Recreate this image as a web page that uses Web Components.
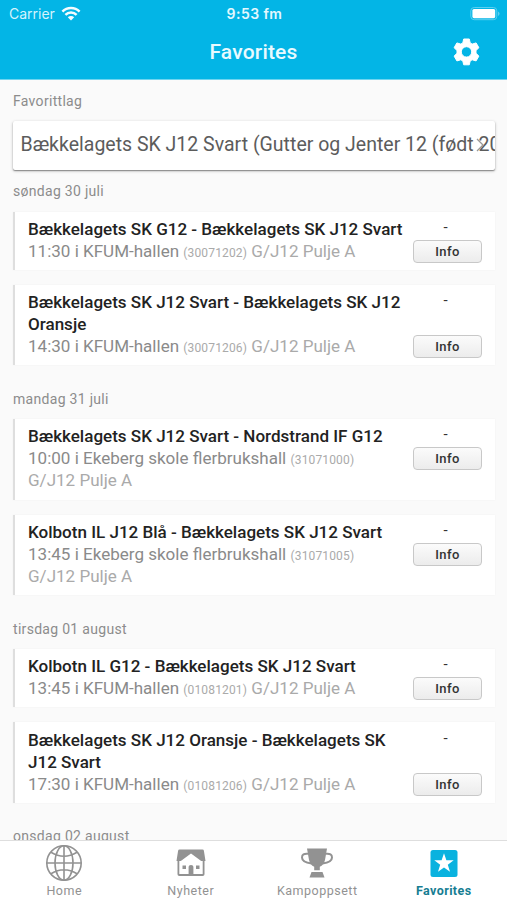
<!DOCTYPE html>
<html lang="no">
<head>
<meta charset="utf-8">
<meta name="viewport" content="width=device-width, initial-scale=1">
<title>Favorites</title>
<style>
body {
    background: #fafafa;
    font-family: Roboto, "Liberation Sans", sans-serif;
    margin: 0;
    overflow: hidden;
}
</style>
</head>
<body>
<favorites-app>
    <status-bar slot="header"></status-bar>
    <title-bar slot="header">Favorites</title-bar>

    <section-label>Favorittlag</section-label>
    <team-select>Bækkelagets SK J12 Svart (Gutter og Jenter 12 (født 2011))</team-select>

    <match-day>
        <span slot="date">søndag 30 juli</span>
        <match-card time="11:30" venue="KFUM-hallen" number="30071202">Bækkelagets SK G12 - Bækkelagets SK J12 Svart</match-card>
        <match-card time="14:30" venue="KFUM-hallen" number="30071206">Bækkelagets SK J12 Svart - Bækkelagets SK J12 Oransje</match-card>
    </match-day>
    <match-day>
        <span slot="date">mandag 31 juli</span>
        <match-card time="10:00" venue="Ekeberg skole flerbrukshall" number="31071000">Bækkelagets SK J12 Svart - Nordstrand IF G12</match-card>
        <match-card time="13:45" venue="Ekeberg skole flerbrukshall" number="31071005">Kolbotn IL J12 Blå - Bækkelagets SK J12 Svart</match-card>
    </match-day>
    <match-day>
        <span slot="date">tirsdag 01 august</span>
        <match-card time="13:45" venue="KFUM-hallen" number="01081201">Kolbotn IL G12 - Bækkelagets SK J12 Svart</match-card>
        <match-card time="17:30" venue="KFUM-hallen" number="01081206">Bækkelagets SK J12 Oransje - Bækkelagets SK J12 Svart</match-card>
    </match-day>
    <match-day>
        <span slot="date">onsdag 02 august</span>
    </match-day>

    <tab-bar slot="footer">
        <tab-item icon="globe">Home</tab-item>
        <tab-item icon="house">Nyheter</tab-item>
        <tab-item icon="trophy">Kampoppsett</tab-item>
        <tab-item icon="star" active>Favorites</tab-item>
    </tab-bar>
</favorites-app>

<script>
(function (){
    function define(name, html) {
        const template = document.createElement("template");
        template.innerHTML = html;

        customElements.define(name, class extends HTMLElement {
            constructor() {
                super();

                this.attachShadow({ mode: "open" });
                this.shadowRoot.appendChild(template.content.cloneNode(true));
            }
        });
    }

    define("favorites-app", `
    <style>
    :host {
        display: flex;
        flex-direction: column;
        height: 900px;
        width: 507px;
    }

    header {
        background: #03b5e6;
        box-sizing: border-box;
        border-bottom: 1px solid #6fd5f0;
        color: #fff;
        flex: none;
        height: 80px;
    }

    main {
        box-sizing: border-box;
        flex: 1;
        min-height: 0;
        overflow: hidden;
        padding: 12px 12.5px 0 13px;
    }
    </style>

    <header><slot name="header"></slot></header>
    <main><slot></slot></main>
    <slot name="footer"></slot>
    `);

    define("status-bar", `
    <style>
    :host {
        align-items: center;
        box-sizing: border-box;
        display: grid;
        font: 14px Inter, sans-serif;
        grid-template-columns: 1fr auto 1fr;
        height: 27px;
        padding: 0 7px 0 9px;
    }

    .carrier {
        align-items: center;
        color: #d5f3fc;
        display: flex;
        gap: 6px;
    }

    .time {
        color: #e4f8fe;
        font-size: 14px;
        font-weight: 600;
        letter-spacing: 0.45px;
    }

    .battery {
        justify-self: end;
    }

    svg {
        display: block;
    }
    </style>

    <div class="carrier">
        <span>Carrier</span>
        <svg width="20" height="16" viewBox="0 0 20 16" fill="none" stroke="#f4fcff" stroke-width="2.5">
            <path d="M1.4 5.6a12.2 12.2 0 0 1 17.2 0M4.4 8.900a8 8 0 0 1 11.2 0"/>
            <path d="M6.8 11.2a4.6 4.6 0 0 1 6.4 0L10 14.5z" fill="#f4fcff" stroke="none"/>
        </svg>
    </div>
    <span class="time">9:53 fm</span>
    <svg class="battery" width="30" height="14" viewBox="0 0 30 14">
        <rect x=".8" y=".5" width="26" height="12.2" rx="3.4" fill="none" stroke="#5ccfef"/>
        <rect x="2.4" y="2" width="22.8" height="9.2" rx="1.6" fill="#fff"/>
        <path d="M28 4.500q1.600.7 1.600 2.200T28 8.900z" fill="#5ccfef"/>
    </svg>
    `);

    define("title-bar", `
    <style>
    :host {
        align-items: center;
        box-sizing: border-box;
        display: grid;
        grid-template-columns: 1fr auto 1fr;
        height: 50px;
        padding: 0 27px;
    }

    h1 {
        color: #e9faff;
        font-size: 21px;
        font-weight: 500;
        grid-column: 2;
        letter-spacing: 0.2px;
        margin: 0;
    }

    svg {
        display: block;
        justify-self: end;
    }
    </style>

    <h1><slot></slot></h1>
    <svg width="27" height="28" viewBox="0 0 27 28" aria-label="Settings">
        <path d="M10.7 1h5.6l.9 3.9 2 1.2 3.9-1.2 2.8 4.8-2.9 2.8v2.8l2.9 2.8-2.8 4.8-3.9-1.1-2 1.1-.9 3.9h-5.6l-.9-3.9-2-1.1-3.9 1.1-2.8-4.8L4 15.3v-2.8L1.100 9.700l2.800-4.800 3.900 1.200 2-1.200zM13.500 8.700a5.200 5.200 0 1 0 0 10.400 5.200 5.200 0 1 0 0-10.400z" fill="#fff" fill-rule="evenodd" stroke="#fff" stroke-width="1" stroke-linejoin="round"/>
    </svg>
    `);

    define("section-label", `
    <style>
    :host {
        color: #8c8c8c;
        display: block;
        font-size: 14px;
        letter-spacing: 0.3px;
        line-height: 18px;
    }
    </style>

    <slot></slot>
    `);

    define("team-select", `
    <style>
    :host {
        background: #fff;
        border-radius: 2px;
        box-shadow: 0 1px 3px rgba(0, 0, 0, 0.3), 0 1px 1px rgba(0, 0, 0, 0.3);
        box-sizing: border-box;
        color: #5c5c5c;
        display: block;
        font-size: 19.5px;
        height: 49px;
        line-height: 48px;
        margin: 11px 0 12px;
        overflow: hidden;
        padding-left: 7.5px;
        position: relative;
        white-space: nowrap;
    }

    svg {
        position: absolute;
        right: 11px;
        top: 17px;
    }
    </style>

    <slot></slot>
    <svg width="8" height="14" viewBox="0 0 8 14" fill="none" stroke="#999" stroke-width="1.3"><path d="M1 1l6 6-6 6"/></svg>
    `);

    define("match-day", `
    <style>
    :host {
        display: block;
    }

    .matches {
        display: flex;
        flex-direction: column;
        gap: 15px;
        padding: 11.5px 0 24.5px;
    }
    </style>

    <section-label><slot name="date"></slot></section-label>
    <div class="matches"><slot></slot></div>
    `);

    define("info-button", `
    <style>
    :host {
        display: block;
    }

    button {
        background: linear-gradient(#fbfbfb, #ececec);
        border: 1px solid #c8c8c8;
        border-radius: 4px;
        box-sizing: border-box;
        color: #333;
        display: block;
        font: 500 13px/20px Roboto, sans-serif;
        height: 23px;
        letter-spacing: 0.4px;
        margin: 0 0 -1px;
        padding: 1px 0 0;
        width: 69px;
    }
    </style>

    <button><slot></slot></button>
    `);

    const matchTemplate = document.createElement("template");
    matchTemplate.innerHTML = `
    <style>
    :host {
        background: #fff;
        border-left: 2px solid #dedede;
        box-shadow: 0 0 2px rgba(0, 0, 0, 0.04);
        box-sizing: border-box;
        column-gap: 5px;
        display: grid;
        font-size: 17.05px;
        grid-template-columns: 380px 69px;
        line-height: 22px;
        padding: 6.2px 13px 8.2px;
    }

    .teams {
        color: #222;
        font-weight: 500;
    }

    .score {
        color: #333;
        font-size: 15px;
        line-height: 18px;
        padding-right: 4px;
        text-align: center;
    }

    .details {
        color: #8a8a8a;
    }

    small {
        color: #aaa;
        font-size: 12px;
        letter-spacing: 0.15px;
        line-height: 1;
    }

    .pool {
        color: #aaa;
        display: inline-block;
    }
    </style>

    <div class="teams"><slot></slot></div>
    <div class="score">-</div>
    <div class="details"><span class="place"></span> <small></small> <span class="pool">G/J12 Pulje A</span></div>
    <info-button>Info</info-button>
    `;

    class MatchCard extends HTMLElement {
        constructor() {
            super();

            this.attachShadow({ mode: "open" });
            this.shadowRoot.appendChild(matchTemplate.content.cloneNode(true));
        }

        connectedCallback() {
            this.shadowRoot.querySelector(".place").textContent =
                `${this.getAttribute("time")} i ${this.getAttribute("venue")}`;
            this.shadowRoot.querySelector("small").textContent = `(${this.getAttribute("number")})`;
        }
    }

    customElements.define("match-card", MatchCard);

    define("tab-bar", `
    <style>
    :host {
        background: #fff;
        border-top: 1px solid #dedede;
        box-sizing: border-box;
        display: grid;
        flex: none;
        grid-template-columns: repeat(4, 1fr);
        height: 60px;
        padding-left: 1px;
        position: relative;
    }
    </style>

    <slot></slot>
    `);

    const icons = {
        globe: `
        <g fill="none" stroke="currentColor" stroke-width="1.6">
            <circle cx="19" cy="19" r="17.2"/>
            <ellipse cx="19" cy="19" rx="9" ry="17.2"/>
            <path d="M19 1.8v34.4M1.8 19h34.4M6 8.2q13 8 26 0M6 29.8q13-8 26 0"/>
        </g>`,
        house: `
        <g fill="currentColor">
            <path d="M7.5 5.5h23q1.200 0 1.400 1.200L33.500 17h-4.300L19 9.500 8.800 17H4.500l1.600-10.300Q6.300 5.500 7.500 5.500z"/>
            <path d="M5.500 16h1.800v14h23.400V16h1.800v14.200q0 1.800-1.800 1.800H7.300q-1.800 0-1.800-1.800z"/>
            <path d="M16.600 31v-8.200q0-1.800 2.400-1.800t2.400 1.800V31zM10.500 21.500h3.500V25h-3.500zM24 21.500h3.500V25H24z"/>
        </g>`,
        trophy: `
        <path d="M9 4.500h20l-2 11.500q-1.200 5.200-5.200 6.800v3.500h-5.600v-3.500q-4-1.600-5.200-6.800zM13.500 28h11l2 5.500h-15z" fill="currentColor"/>
        <path d="M10 9.800q-6-.6-6 3.600 0 4.800 9.500 6M28 9.800q6-.6 6 3.600 0 4.800-9.500 6" fill="none" stroke="currentColor" stroke-width="2"/>`,
        star: `
        <rect x="5.500" y="6" width="27" height="27" rx="2.500" fill="#09b2df"/>
        <path d="M19 9.200l2.400 7 7.300.1-5.900 4.400 2.200 7.100-6-4.200-6 4.200 2.200-7.100-5.900-4.400 7.300-.1z" fill="#fff"/>`
    };

    const tabTemplate = document.createElement("template");
    tabTemplate.innerHTML = `
    <style>
    :host {
        align-items: center;
        color: #929292;
        display: flex;
        flex-direction: column;
        font-size: 12.5px;
        letter-spacing: 0.5px;
        line-height: 16px;
        padding-top: 3px;
    }

    :host([active]) {
        color: #167d92;
        font-weight: 700;
        letter-spacing: 0.4px;
    }

    svg {
        display: block;
        margin-bottom: 1px;
    }
    </style>

    <svg width="38" height="38" viewBox="0 0 38 38"></svg>
    <slot></slot>
    `;

    class TabItem extends HTMLElement {
        constructor() {
            super();

            this.attachShadow({ mode: "open" });
            this.shadowRoot.appendChild(tabTemplate.content.cloneNode(true));
        }

        connectedCallback() {
            this.shadowRoot.querySelector("svg").innerHTML = icons[this.getAttribute("icon")];
        }
    }

    customElements.define("tab-item", TabItem);
})();
</script>
</body>
</html>
